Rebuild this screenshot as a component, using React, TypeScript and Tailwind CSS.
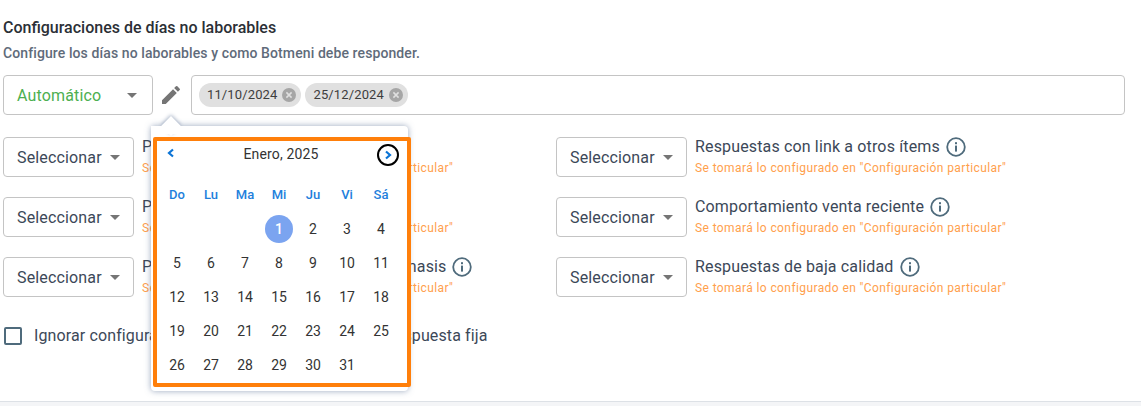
import React from "react";

const font = { fontFamily: "Roboto, sans-serif" };

function Caret() {
  return <span className="w-0 h-0 border-x-[5px] border-x-transparent border-t-[5px] border-t-[#757575]" />;
}

function Info() {
  return (
    <svg width="20" height="20" viewBox="0 0 20 20" className="shrink-0">
      <circle cx="10" cy="10" r="8.8" fill="none" stroke="#4f6b7c" strokeWidth="1.8" />
      <rect x="9" y="8.6" width="2" height="6" fill="#4f6b7c" />
      <rect x="9" y="5.2" width="2" height="2" fill="#4f6b7c" />
    </svg>
  );
}

function Sel() {
  return (
    <div className="w-[131px] h-10 shrink-0 border border-[#c4c4c4] rounded flex items-center pl-[13px] gap-[8px] text-base tracking-[0.15px] text-[#3c4858]">
      <span className="pt-[1px]">Seleccionar</span>
      <Caret />
    </div>
  );
}

function Item({ label }: { label: string }) {
  return (
    <div className="flex gap-2 w-[553px]">
      <Sel />
      <div>
        <div className="flex items-center gap-[6px] h-5 text-base leading-5 tracking-[0.15px] text-[#3c4858]">
          <span>{label}</span>
          <Info />
        </div>
        <div className="text-xs leading-4 mt-[3px] text-[#ffa04d] tracking-[0.4px]">
          Se tomará lo configurado en "Configuración particular"
        </div>
      </div>
    </div>
  );
}

function Chip({ t }: { t: string }) {
  return (
    <div className="h-6 rounded-full bg-[#e0e0e0] flex items-center pl-2 pr-[5px] gap-[5px] text-[13px] tracking-[0.13px] text-[#3d3d3d]">
      <span>{t}</span>
      <svg width="14" height="14" viewBox="0 0 14 14">
        <circle cx="7" cy="7" r="7" fill="#a6a6a6" />
        <path d="M4.4 4.4 9.6 9.6M9.6 4.4 4.4 9.6" stroke="#e0e0e0" strokeWidth="1.5" />
      </svg>
    </div>
  );
}

const heads = ["Do", "Lu", "Ma", "Mi", "Ju", "Vi", "Sá"];
const days: (number | null)[] = [null, null, null];
for (let i = 1; i <= 31; i++) days.push(i);

function Popover() {
  return (
    <div className="absolute left-[151px] top-[126px] w-[257px] h-[265px] bg-white rounded shadow-[0_0_6px_rgba(70,95,135,0.55)]">
      <div className="absolute left-[13px] -top-[7px] w-[14px] h-[14px] rotate-45 bg-white shadow-[-1px_-1px_4px_rgba(70,95,135,0.45)]" />
      <div className="absolute left-0 top-0 w-[40px] h-[8px] bg-white" />
      <div className="absolute left-[2px] top-[11px] w-[258px] h-[250px] bg-white border-[4px] border-[#ff7f0a] rounded-[2px]">
        <div className="relative h-[26px] flex items-center justify-center text-sm tracking-[0.15px] text-[#333]">
          <span className="pr-[2px]">Enero, 2025</span>
          <svg width="10" height="10" viewBox="0 0 10 10" className="absolute left-[9px] top-[7px]">
            <path d="M7 1.5 3 5l4 3.5" fill="none" stroke="#0b74d6" strokeWidth="2.2" />
          </svg>
          <div className="absolute left-[220px] top-[3px] w-[22px] h-[22px] rounded-full border-2 border-black flex items-center justify-center">
            <svg width="10" height="10" viewBox="0 0 10 10">
              <path d="M3 1.5 7 5 3 8.5" fill="none" stroke="#0b74d6" strokeWidth="2.2" />
            </svg>
          </div>
        </div>
        <div className="grid grid-cols-[repeat(7,34px)] auto-rows-[34px] pl-[3px] pt-[11px] text-sm text-[#333]">
          {heads.map((h) => (
            <div key={h} className="flex items-center justify-center pt-[1px] text-[13px] font-medium text-[#1e80dc]">
              {h}
            </div>
          ))}
          {days.map((d, i) => (
            <div key={i} className="flex items-center justify-center">
              {d === 1 ? (
                <span className="w-7 h-7 rounded-full bg-[#7ba4f0] text-white font-medium flex items-center justify-center">1</span>
              ) : (
                d
              )}
            </div>
          ))}
        </div>
      </div>
    </div>
  );
}

export default function App() {
  return (
    <div style={font} className="w-[1141px] h-[406px] bg-[#f4f5f7] overflow-hidden">
      <div className="relative h-[402px] bg-white border-b border-[#dde1e6] pl-[3px] pt-[19px]">
        <div className="text-base leading-[18px] font-medium text-[#2b2f36]">Configuraciones de días no laborables</div>
        <div className="text-sm leading-4 mt-[8px] font-medium tracking-[0.1px] text-[#5f6b7a]">
          Configure los días no laborables y como Botmeni debe responder.
        </div>
        <div className="flex items-center mt-[14px] h-10">
          <div className="w-[150px] h-10 border border-[#c4c4c4] rounded flex items-center justify-between pl-[13px] pr-[15px] text-base tracking-[0.15px] text-[#4caf50]">
            <span className="pt-[1px]">Automático</span>
            <Caret />
          </div>
          <svg width="24" height="24" viewBox="0 0 24 24" className="ml-[6px] mr-[8px]" fill="#757575">
            <path d="M3 17.25V21h3.75L17.81 9.94l-3.75-3.75L3 17.25zM20.71 7.04a1 1 0 0 0 0-1.41l-2.34-2.34a1 1 0 0 0-1.41 0l-1.83 1.83 3.75 3.75 1.83-1.83z" />
          </svg>
          <div className="w-[934px] h-10 border border-[#c4c4c4] rounded flex items-center pl-[7px] gap-1">
            <Chip t="11/10/2024" />
            <Chip t="25/12/2024" />
          </div>
        </div>
        <div className="flex flex-col gap-5 mt-[22px]">
          <div className="flex">
            <Item label="Preguntas" />
            <Item label="Respuestas con link a otros ítems" />
          </div>
          <div className="flex">
            <Item label="Preguntas" />
            <Item label="Comportamiento venta reciente" />
          </div>
          <div className="flex">
            <Item label="Preguntas con respuestas sobre gimnasis" />
            <Item label="Respuestas de baja calidad" />
          </div>
        </div>
        <div className="flex items-center mt-[27px] ml-[1px] gap-3 text-base tracking-[0.12px] text-[#3c4858]">
          <span className="w-[18px] h-[18px] border-2 border-[#4f6b7c] rounded-[2px]" />
          <span>Ignorar configuraciones de días no laborables en respuesta fija</span>
        </div>
        <Popover />
      </div>
    </div>
  );
}
